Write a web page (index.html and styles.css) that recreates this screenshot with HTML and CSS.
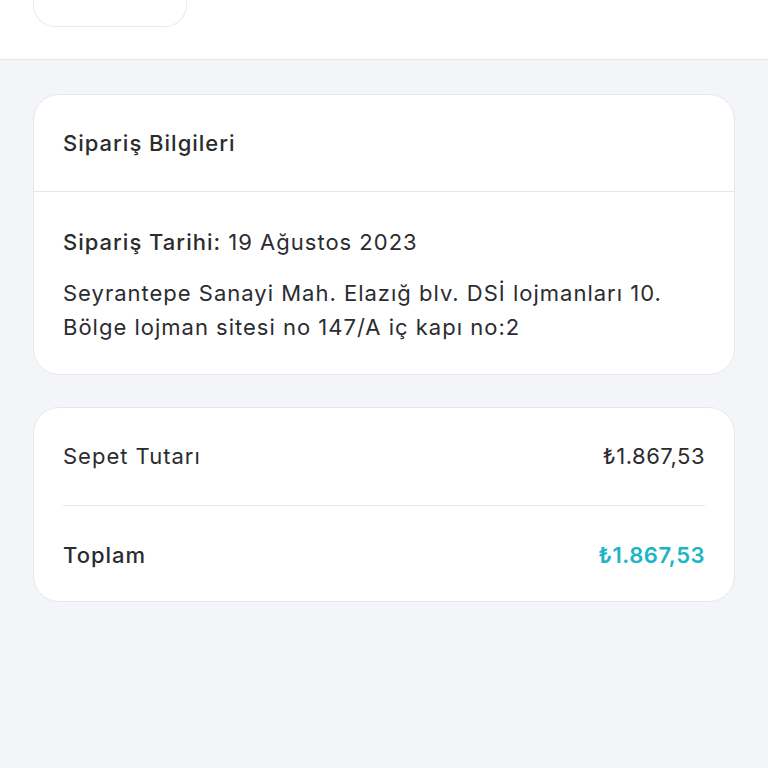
FILE: index.html
```html
<!DOCTYPE html>
<html lang="tr">
<head>
  <meta charset="UTF-8">
  <title>Sipariş Detayı</title>
  <link rel="stylesheet" href="styles.css">
</head>
<body>
<header class="topbar">
  <div class="back-box"></div>
</header>

<main class="content">
  <section class="card">
    <div class="card-header">Sipariş Bilgileri</div>
    <div class="card-body">
      <p class="order-date"><strong>Sipariş Tarihi:</strong> 19 Ağustos 2023</p>
      <p class="address">Seyrantepe Sanayi Mah. Elazığ blv. DSİ lojmanları 10.<br>Bölge lojman sitesi no 147/A iç kapı no:2</p>
    </div>
  </section>

  <section class="card summary">
    <div class="summary-row">
      <span>Sepet Tutarı</span>
      <span class="price">₺1.867,53</span>
    </div>
    <div class="summary-row total">
      <span>Toplam</span>
      <span class="price total-price">₺1.867,53</span>
    </div>
  </section>
</main>
</body>
</html>
```

FILE: styles.css
```css
body{
  font-family: Inter, "DejaVu Sans", sans-serif;
  margin: 0;
  padding: 0;
  background: #f3f5f9;
  color: #2b2c30;
  font-size: 22px;
  letter-spacing: 1px;
}
*{
  box-sizing: border-box;
}
.topbar{
  background: #fff;
  height: 60px;
  border-bottom: 1px solid #e3e6eb;
  padding: 0 33px;
}
.back-box{
  width: 154px;
  height: 27px;
  border: 1px solid #e9eaed;
  border-top: 0;
  border-radius: 0 0 22px 22px;
}
.content{
  padding: 34px 33px;
  display: flex;
  flex-direction: column;
  gap: 32px;
}
.card{
  background: #fff;
  border: 1px solid #e4e7ec;
  border-radius: 26px;
  line-height: 34px;
}
.card-header{
  padding: 31px 29px;
  font-weight: 500;
  border-bottom: 1px solid #e4e7ec;
}
.card-body{
  padding: 33px 29px 30px 29px;
}
.card-body p{
  margin: 0;
}
.order-date{
  margin-bottom: 17px !important;
}
.order-date strong{
  font-weight: 500;
}
.summary{
  padding: 0 29px;
}
.summary-row{
  display: flex;
  justify-content: space-between;
  padding: 31px 0 32px;
}
.summary-row + .summary-row{
  border-top: 1px solid #e4e7ec;
}
.summary-row.total{
  font-weight: 500;
  padding: 32px 0 29px;
}
.price{
  letter-spacing: 0.5px;
}
.total-price{
  color: #1db4c6;
  font-weight: 600;
}
```
